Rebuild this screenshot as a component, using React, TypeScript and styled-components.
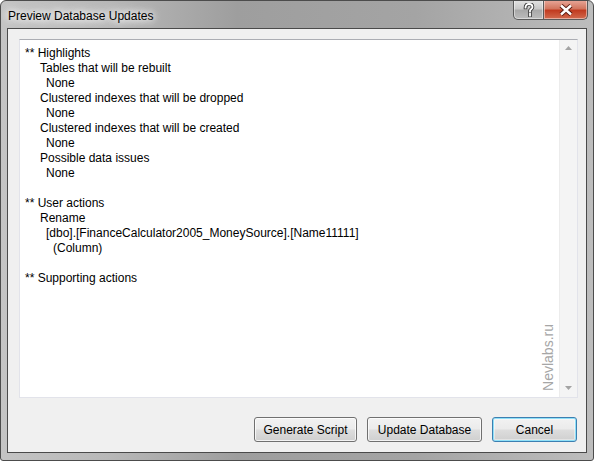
import React from "react";
import styled, { createGlobalStyle } from "styled-components";

const GlobalStyle = createGlobalStyle`
  html, body {
    margin: 0;
    padding: 0;
    background: #ffffff;
  }
  body {
    font-family: "Liberation Sans", Arial, sans-serif;
    font-size: 12px;
    color: #000;
  }
`;

const Window = styled.div`
  position: relative;
  width: 594px;
  height: 461px;
  box-sizing: border-box;
  display: flex;
  flex-direction: column;
  border: 1px solid #4c4c4c;
  border-radius: 6px 6px 3px 3px;
  padding: 0 6px 7px;
  background: linear-gradient(
    90deg,
    #c4c4c4 0%,
    #b8b8b8 18%,
    #9e9e9e 40%,
    #a4a4a4 70%,
    #bdbdbd 100%
  );
  overflow: hidden;
`;

const TitleBar = styled.div`
  height: 27px;
  display: flex;
  align-items: flex-start;
  justify-content: space-between;
`;

const Title = styled.div`
  padding: 8px 0 0 1px;
  font-size: 12px;
  color: #000;
  text-shadow: 0 0 6px #fff, 0 0 10px #fff, 0 0 14px #fff;
`;

const Caption = styled.div`
  display: flex;
  margin: -1px -1px 0 0;
`;

const CaptionButton = styled.div<{ $close?: boolean }>`
  width: ${(p) => (p.$close ? "44px" : "31px")};
  height: 20px;
  box-sizing: border-box;
  border: 1px solid #5a5a5a;
  border-top: none;
  border-left: ${(p) => (p.$close ? "none" : "1px solid #5a5a5a")};
  border-radius: ${(p) => (p.$close ? "0 0 5px 0" : "0 0 0 5px")};
  display: flex;
  align-items: center;
  justify-content: center;
  background: ${(p) =>
    p.$close
      ? "linear-gradient(180deg, #e9a99b 0%, #d2765f 45%, #c13b20 55%, #d26a4e 100%)"
      : "linear-gradient(180deg, #e4e4e4 0%, #c9c9c9 45%, #a9a9a9 55%, #bcbcbc 100%)"};
  box-shadow: inset 0 0 0 1px rgba(255, 255, 255, 0.45);
`;

const Client = styled.div`
  flex: 1;
  display: flex;
  flex-direction: column;
  border: 1px solid #4a4a4a;
  background: #f0f0f0;
  padding: 10px 8px 10px 11px;
  min-height: 0;
`;

const TextBox = styled.div`
  position: relative;
  height: 359px;
  box-sizing: border-box;
  display: flex;
  background: #fff;
  border: 1px solid #e2e3ea;
  border-top-color: #abadb3;
`;

const Content = styled.div`
  flex: 1;
  padding: 6px 0 0 5px;
  line-height: 15px;
`;

const Line = styled.div<{ $indent: number }>`
  height: 15px;
  padding-left: ${(p) => p.$indent}px;
  white-space: pre;
`;

const ScrollBar = styled.div`
  width: 17px;
  display: flex;
  flex-direction: column;
  justify-content: space-between;
  align-items: center;
  background: #f4f4f4;
  border-left: 1px solid #ececec;
  padding: 6px 0 7px;
`;

const Watermark = styled.div`
  position: absolute;
  right: 21px;
  bottom: 6px;
  writing-mode: vertical-rl;
  transform: rotate(180deg);
  font-size: 14px;
  line-height: 16px;
  color: #a6a6a6;
  white-space: nowrap;
`;

const ButtonRow = styled.div`
  display: flex;
  justify-content: flex-end;
  gap: 10px;
  margin-top: 19px;
  padding-right: 1px;
`;

const Button = styled.button<{ $w: number; $default?: boolean }>`
  width: ${(p) => p.$w}px;
  height: 25px;
  border-radius: 3px;
  font-family: inherit;
  font-size: 12px;
  color: #000;
  padding: 0;
  border: 1px solid ${(p) => (p.$default ? "#3c7fb1" : "#707070")};
  background: linear-gradient(
    180deg,
    #f2f2f2 0%,
    #ebebeb 48%,
    #dddddd 52%,
    #cfcfcf 100%
  );
  box-shadow: ${(p) =>
    p.$default
      ? "inset 0 0 0 1px #8fe0f8, inset 0 0 0 2px rgba(255,255,255,0.4)"
      : "inset 0 0 0 1px rgba(255,255,255,0.75)"};
`;

const lines: [number, string][] = [
  [0, "** Highlights"],
  [15, "Tables that will be rebuilt"],
  [21, "None"],
  [15, "Clustered indexes that will be dropped"],
  [21, "None"],
  [15, "Clustered indexes that will be created"],
  [21, "None"],
  [15, "Possible data issues"],
  [21, "None"],
  [0, ""],
  [0, "** User actions"],
  [15, "Rename"],
  [21, "[dbo].[FinanceCalculator2005_MoneySource].[Name11111]"],
  [28, "(Column)"],
  [0, ""],
  [0, "** Supporting actions"],
];

const Arrow = ({ up }: { up?: boolean }) => (
  <svg width="7" height="4" viewBox="0 0 7 4">
    <path d={up ? "M0 4 L3.5 0 L7 4 Z" : "M0 0 L3.5 4 L7 0 Z"} fill="#a3a3a3" />
  </svg>
);

const HelpGlyph = () => (
  <svg width="12" height="14" viewBox="0 0 12 14">
    <path
      d="M2.5 4.5 C2.5 2 4 1 6 1 C8.3 1 9.5 2.3 9.5 4 C9.5 5.8 7.5 6.3 7 7.5 L7 8.5 M7 11 L7 12.5"
      fill="none"
      stroke="#3a3a3a"
      strokeWidth="3.6"
      strokeLinecap="square"
    />
    <path
      d="M2.5 4.5 C2.5 2 4 1 6 1 C8.3 1 9.5 2.3 9.5 4 C9.5 5.8 7.5 6.3 7 7.5 L7 8.5 M7 11 L7 12.5"
      fill="none"
      stroke="#ffffff"
      strokeWidth="1.8"
      strokeLinecap="square"
    />
  </svg>
);

const CloseGlyph = () => (
  <svg width="16" height="12" viewBox="0 0 16 12">
    <path d="M3 1.5 L13 10.5 M13 1.5 L3 10.5" stroke="#5a1c12" strokeWidth="4.4" />
    <path d="M3 1.5 L13 10.5 M13 1.5 L3 10.5" stroke="#ffffff" strokeWidth="2.4" />
  </svg>
);

export default () => (
  <>
    <GlobalStyle />
    <Window>
      <TitleBar>
        <Title>Preview Database Updates</Title>
        <Caption>
          <CaptionButton>
            <HelpGlyph />
          </CaptionButton>
          <CaptionButton $close>
            <CloseGlyph />
          </CaptionButton>
        </Caption>
      </TitleBar>
      <Client>
        <TextBox>
          <Content>
            {lines.map(([indent, text], i) => (
              <Line key={i} $indent={indent}>
                {text}
              </Line>
            ))}
          </Content>
          <ScrollBar>
            <Arrow up />
            <Arrow />
          </ScrollBar>
          <Watermark>Nevlabs.ru</Watermark>
        </TextBox>
        <ButtonRow>
          <Button $w={103}>Generate Script</Button>
          <Button $w={115}>Update Database</Button>
          <Button $w={85} $default>
            Cancel
          </Button>
        </ButtonRow>
      </Client>
    </Window>
  </>
);
